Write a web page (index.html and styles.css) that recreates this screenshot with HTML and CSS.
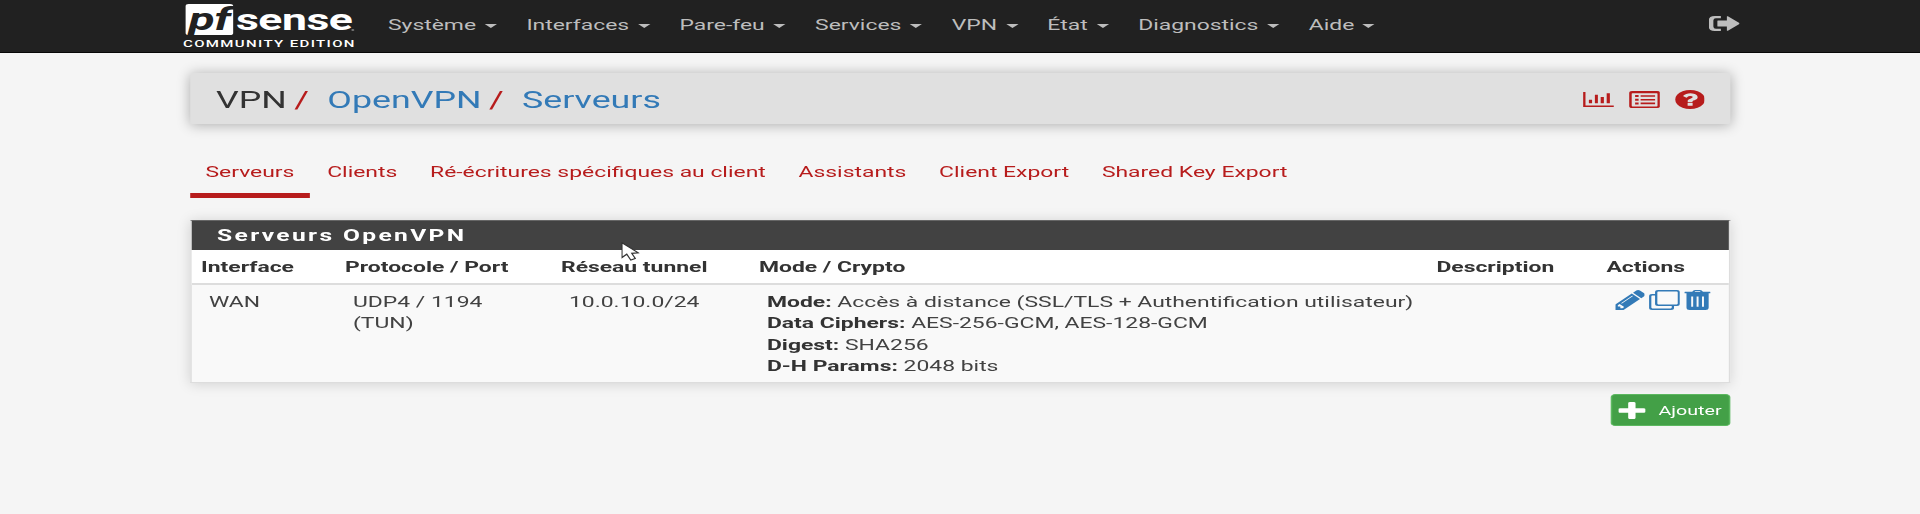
FILE: index.html
```html
<!DOCTYPE html>
<html lang="fr">
<head>
<meta charset="utf-8">
<title>VPN / OpenVPN / Serveurs</title>
<link rel="stylesheet" href="styles.css">
</head>
<body>
<div class="page">
  <header class="navbar">
    <a class="brand">
      <span class="logo"><span class="logo-pf"><i>pf</i></span><span class="logo-sense">sense</span><span class="logo-dot"></span></span>
      <span class="edition">COMMUNITY EDITION</span>
    </a>
    <nav class="menu">
      <a><span>Système</span><b class="caret"></b></a>
      <a><span>Interfaces</span><b class="caret"></b></a>
      <a><span>Pare-feu</span><b class="caret"></b></a>
      <a><span>Services</span><b class="caret"></b></a>
      <a><span>VPN</span><b class="caret"></b></a>
      <a><span>État</span><b class="caret"></b></a>
      <a><span>Diagnostics</span><b class="caret"></b></a>
      <a><span>Aide</span><b class="caret"></b></a>
    </nav>
    <svg class="logout" viewBox="0 0 31 15" preserveAspectRatio="none"><path d="M12 0H6Q0 0 0 4V11Q0 15 6 15H12V12.7H7Q4.500 12.700 4.500 10.500V4.500Q4.500 2.300 7 2.300H12ZM9 4.500H18V.6Q18 0 19 .3L30.500 7Q31 7.500 30.500 8L19 14.700Q18 15 18 14.400V10.500H9Q8.500 10.500 8.500 10V5Q8.500 4.500 9 4.500Z"/></svg>
  </header>

  <main class="container">
    <div class="titlebar">
      <div class="crumbs"><span>VPN</span><em>/</em><a>OpenVPN</a><em>/</em><a>Serveurs</a></div>
      <div class="tools">
        <svg class="i-chart" viewBox="0 0 31 15" preserveAspectRatio="none"><path d="M0 0H2.400V13.400H31V15H0ZM5.800 7.800H9V11.300H5.800ZM11.800 2.800H14.800V11.300H11.800ZM17.600 5H20.800V11.300H17.600ZM23.600 1.200H26.800V11.300H23.600Z"/></svg>
        <svg class="i-list" viewBox="0 0 31 17" preserveAspectRatio="none"><path fill-rule="evenodd" d="M3 0H28Q31 0 31 2V15Q31 17 28 17H3Q0 17 0 15V2Q0 0 3 0ZM3.300 2.200Q2.600 2.200 2.600 2.800V14.800Q2.600 15.400 3.300 15.400H27.700Q28.400 15.400 28.400 14.800V2.800Q28.400 2.200 27.700 2.200ZM6 4H9.500V6H6ZM6 7.700H9.500V9.700H6ZM6 11.400H9.500V13.400H6ZM11.500 4.200H26V5.800H11.500ZM11.500 7.900H26V9.500H11.500ZM11.500 11.600H26V13.200H11.500Z"/></svg>
        <svg class="i-help" viewBox="128 128 1536 1536" preserveAspectRatio="none"><path d="M1024 1376v-192q0-14-9-23t-23-9h-192q-14 0-23 9t-9 23v192q0 14 9 23t23 9h192q14 0 23-9t9-23zm256-672q0-88-55.500-163t-138.500-116-170-41q-243 0-371 213-15 24 8 42l132 100q7 6 19 6 16 0 25-12 53-68 86-92 34-24 86-24 48 0 85.500 26t37.500 59q0 38-20 61t-68 45q-63 28-115.500 86.500t-52.500 125.500v36q0 14 9 23t23 9h192q14 0 23-9t9-23q0-19 21.500-49.500t54.500-49.500q32-18 49-28.500t46-35 44.500-48 28-60.500 12.500-81zm384 192q0 209-103 385.500t-279.500 279.500-385.500 103-385.500-103-279.500-279.500-103-385.500 103-385.500 279.500-279.500 385.500-103 385.500 103 279.500 279.500 103 385.500z"/></svg>
      </div>
    </div>

    <nav class="tabs">
      <a class="active">Serveurs</a>
      <a>Clients</a>
      <a>Ré-écritures spécifiques au client</a>
      <a>Assistants</a>
      <a>Client Export</a>
      <a>Shared Key Export</a>
    </nav>

    <section class="panel">
      <h2><span>Serveurs OpenVPN</span></h2>
      <div class="row head">
        <span>Interface</span><span>Protocole / Port</span><span>Réseau tunnel</span><span>Mode / Crypto</span><span>Description</span><span>Actions</span>
      </div>
      <div class="row data">
        <span>WAN</span>
        <span>UDP4 / 1194<br>(TUN)</span>
        <span>10.0.10.0/24</span>
        <span><b>Mode:</b> Accès à distance (SSL/TLS + Authentification utilisateur)<br><b>Data Ciphers:</b> AES-256-GCM, AES-128-GCM<br><b>Digest:</b> SHA256<br><b>D-H Params:</b> 2048 bits</span>
        <span></span>
        <div class="actions">
          <svg class="i-pencil" viewBox="128 149 1515 1515" preserveAspectRatio="none"><path d="M491 1536l91-91-235-235-91 91v107h128v128h107zm523-928q0-22-22-22-10 0-17 7l-542 542q-7 7-7 17 0 22 22 22 10 0 17-7l542-542q7-7 7-17zm-54-192l416 416-832 832h-416v-416zm683 96q0 53-37 90l-166 166-416-416 166-165q36-38 90-38 53 0 91 38l235 234q37 39 37 91z"/></svg>
          <svg class="i-clone" viewBox="0 0 31 20" preserveAspectRatio="none"><path fill-rule="evenodd" d="M9 0H28Q31 0 31 2.200V13.800Q31 16 28 16H9Q6 16 6 13.800V2.200Q6 0 9 0ZM9.300 1.600Q8.300 1.600 8.300 2.400V13.600Q8.300 14.400 9.300 14.400H27.700Q28.700 14.400 28.700 13.600V2.400Q28.700 1.600 27.700 1.600ZM6 4V5.600H3.300Q2.300 5.600 2.300 6.400V17.600Q2.300 18.400 3.300 18.400H21.700Q22.700 18.400 22.700 17.600V16H25V17.800Q25 20 22 20H3Q0 20 0 17.800V6.200Q0 4 3 4Z"/></svg>
          <svg class="i-trash" viewBox="0 0 27 20" preserveAspectRatio="none"><path fill-rule="evenodd" d="M8 1.700L9.300.5Q10 0 11 0H16Q17 0 17.700.5L19 1.700H26.400Q27 1.700 27 2.200V2.800Q27 3.300 26.400 3.300H24.800V17.500Q24.800 20 21.500 20H5.500Q2.200 20 2.200 17.500V3.300H.6Q0 3.300 0 2.800V2.200Q0 1.700 .6 1.700ZM10.400 1.700H16.600L15.800 1H11.200ZM7 6.500V16.700H9V6.500ZM12.500 6.500V16.700H14.500V6.500ZM18 6.500V16.700H20V6.500Z"/></svg>
        </div>
      </div>
    </section>

    <div class="footer">
      <a class="add"><svg viewBox="192 192 1408 1408" preserveAspectRatio="none"><path d="M1600 800v192q0 40-28 68t-68 28h-416v416q0 40-28 68t-68 28h-192q-40 0-68-28t-28-68v-416h-416q-40 0-68-28t-28-68v-192q0-40 28-68t68-28h416v-416q0-40 28-68t68-28h192q40 0 68 28t28 68v416h416q40 0 68 28t28 68z"/></svg><span>Ajouter</span></a>
    </div>
  </main>

  <svg class="cursor" viewBox="0 0 18 19" preserveAspectRatio="none"><path d="M.7.700V15.500L5.500 12.200L9.500 18L14 16.500L10.500 11.300L17 10.800Z" fill="#fff" stroke="#333" stroke-width="1.200"/></svg>
</div>
</body>
</html>
```
FILE: styles.css
```css
/* --k is the horizontal stretch of the page; widths are divided by it */
:root { --k: 1.534; }
* { box-sizing: border-box; }
body { margin: 0; overflow: hidden; background: #f5f5f5; }
.page {
  position: relative;
  width: calc(1920px / var(--k));
  height: 514px;
  transform: scaleX(var(--k));
  transform-origin: 0 0;
  font: 14.93px/21.33px Roboto, "Liberation Sans", sans-serif;
  color: #424242;
}
svg { display: block; fill: currentColor; flex: none; }

.navbar {
  display: flex;
  height: 53px;
  padding-left: calc(183px / var(--k));
  background: #212121;
  border-bottom: 1px solid #080808;
  color: #bdbdbd;
}
.brand { width: calc(205px / var(--k)); padding-top: 4px; color: #fff; }
.logo { display: flex; height: 31px; padding-left: calc(3px / var(--k)); }
.logo-pf {
  width: calc(47px / var(--k));
  height: 31px;
  border-radius: 2px;
  background: #fff;
  color: #212121;
  font: bold 31px/31px Roboto, sans-serif;
  letter-spacing: -.3px;
  text-align: center;
  white-space: nowrap;
}
.logo-sense {
  padding-left: calc(3px / var(--k));
  width: calc(118px / var(--k));
  font: bold 29px/32px Roboto, sans-serif;
  letter-spacing: -.3px;
}
.logo-dot { width: 2px; height: 2px; margin-top: 25px; background: #777; border-radius: 50%; }
.edition { display: block; margin-top: 3px; font: 500 9.8px/12px Roboto, sans-serif; letter-spacing: .88px; white-space: nowrap; }
.menu { display: flex; gap: calc(29.5px / var(--k)); padding-top: 15px; }
.menu a { display: flex; }
.caret {
  margin: 9px 0 0 calc(8.6px / var(--k));
  width: 0;
  height: 0;
  border: 4px solid transparent;
  border-bottom: 0;
  border-top-color: #bdbdbd;
}
.logout { width: calc(31px / var(--k)); height: 15px; margin: 16px calc(180px / var(--k)) 0 auto; }

.container { padding: 20px calc(190px / var(--k)) 0 calc(190.5px / var(--k)); }
.titlebar {
  display: flex;
  justify-content: space-between;
  height: 51px;
  padding: 0 calc(25px / var(--k)) 0 calc(25.5px / var(--k));
  background: #e0e0e0;
  border-radius: 2px;
  box-shadow: 0 1px 10px rgba(0, 0, 0, .3);
}
.crumbs { display: flex; font-size: 23.3px; line-height: 54px; color: #333; }
.crumbs a { color: #337ab7; }
.crumbs em { margin: 0 calc(18.3px / var(--k)) 0 calc(7.5px / var(--k)); color: #b71c1c; font-style: normal; }
.tools { display: flex; align-items: flex-start; color: #b71c1c; }
.i-chart { width: calc(31px / var(--k)); height: 15px; margin: 19px calc(15px / var(--k)) 0 0; }
.i-list { width: calc(31px / var(--k)); height: 17px; margin: 18px calc(15.500px / var(--k)) 0 0; }
.i-help { width: calc(30px / var(--k)); height: 19px; margin-top: 17px; }

.tabs { display: flex; gap: calc(2.8px / var(--k)); height: 46px; margin-top: 28px; }
.tabs a { padding: 10px calc(15px / var(--k)) 0; color: #b71c1c; white-space: nowrap; }
.tabs .active { border-bottom: 5px solid #b71c1c; }

.panel {
  height: 163px;
  margin-top: 22px;
  border: 1px solid #ddd;
  border-top-color: #666;
  background: #f9f9f9;
  box-shadow: 0 1px 10px rgba(0, 0, 0, .15);
}
.panel h2 {
  height: 29px;
  margin: 0;
  padding-left: calc(25px / var(--k));
  background: #424242;
  color: #fff;
  font-size: 16px;
  font-weight: 700;
  line-height: 29px;
  letter-spacing: 1.550px;
}
.row {
  display: grid;
  grid-template-columns: calc(144px / var(--k)) calc(216px / var(--k)) calc(198px / var(--k)) calc(677.5px / var(--k)) calc(170px / var(--k)) 1fr;
  white-space: nowrap;
}
.head { height: 35px; padding: 7px 0 0 calc(9px / var(--k)); background: #fff; border-bottom: 2px solid #ddd; font-weight: 700; color: #333; }
.data { padding: 7px 0 0 calc(17px / var(--k)); }
.data b { color: #333; }
.actions { display: flex; margin: -2px 0 0 calc(.5px / var(--k)); color: #337ab7; }
.i-pencil { width: calc(30px / var(--k)); height: 20px; margin-right: calc(4px / var(--k)); }
.i-clone { width: calc(31px / var(--k)); height: 20px; margin-right: calc(4px / var(--k)); }
.i-trash { width: calc(26.5px / var(--k)); height: 20px; }

.footer { display: flex; justify-content: flex-end; padding-top: 11px; }
.add {
  display: flex;
  align-items: flex-start;
  width: calc(120px / var(--k));
  height: 32px;
  padding-left: calc(7px / var(--k));
  border: 1px solid #5cb860;
  border-radius: 3px;
  background: #43a047;
  color: #fff;
  font-size: 12.8px;
}
.add svg { width: calc(27px / var(--k)); height: 17px; margin: 7px calc(13px / var(--k)) 0 0; }
.add span { padding-top: 5px; }

.cursor { position: absolute; left: calc(621px / var(--k)); top: 241.5px; width: calc(18px / var(--k)); height: 19px; }
```
